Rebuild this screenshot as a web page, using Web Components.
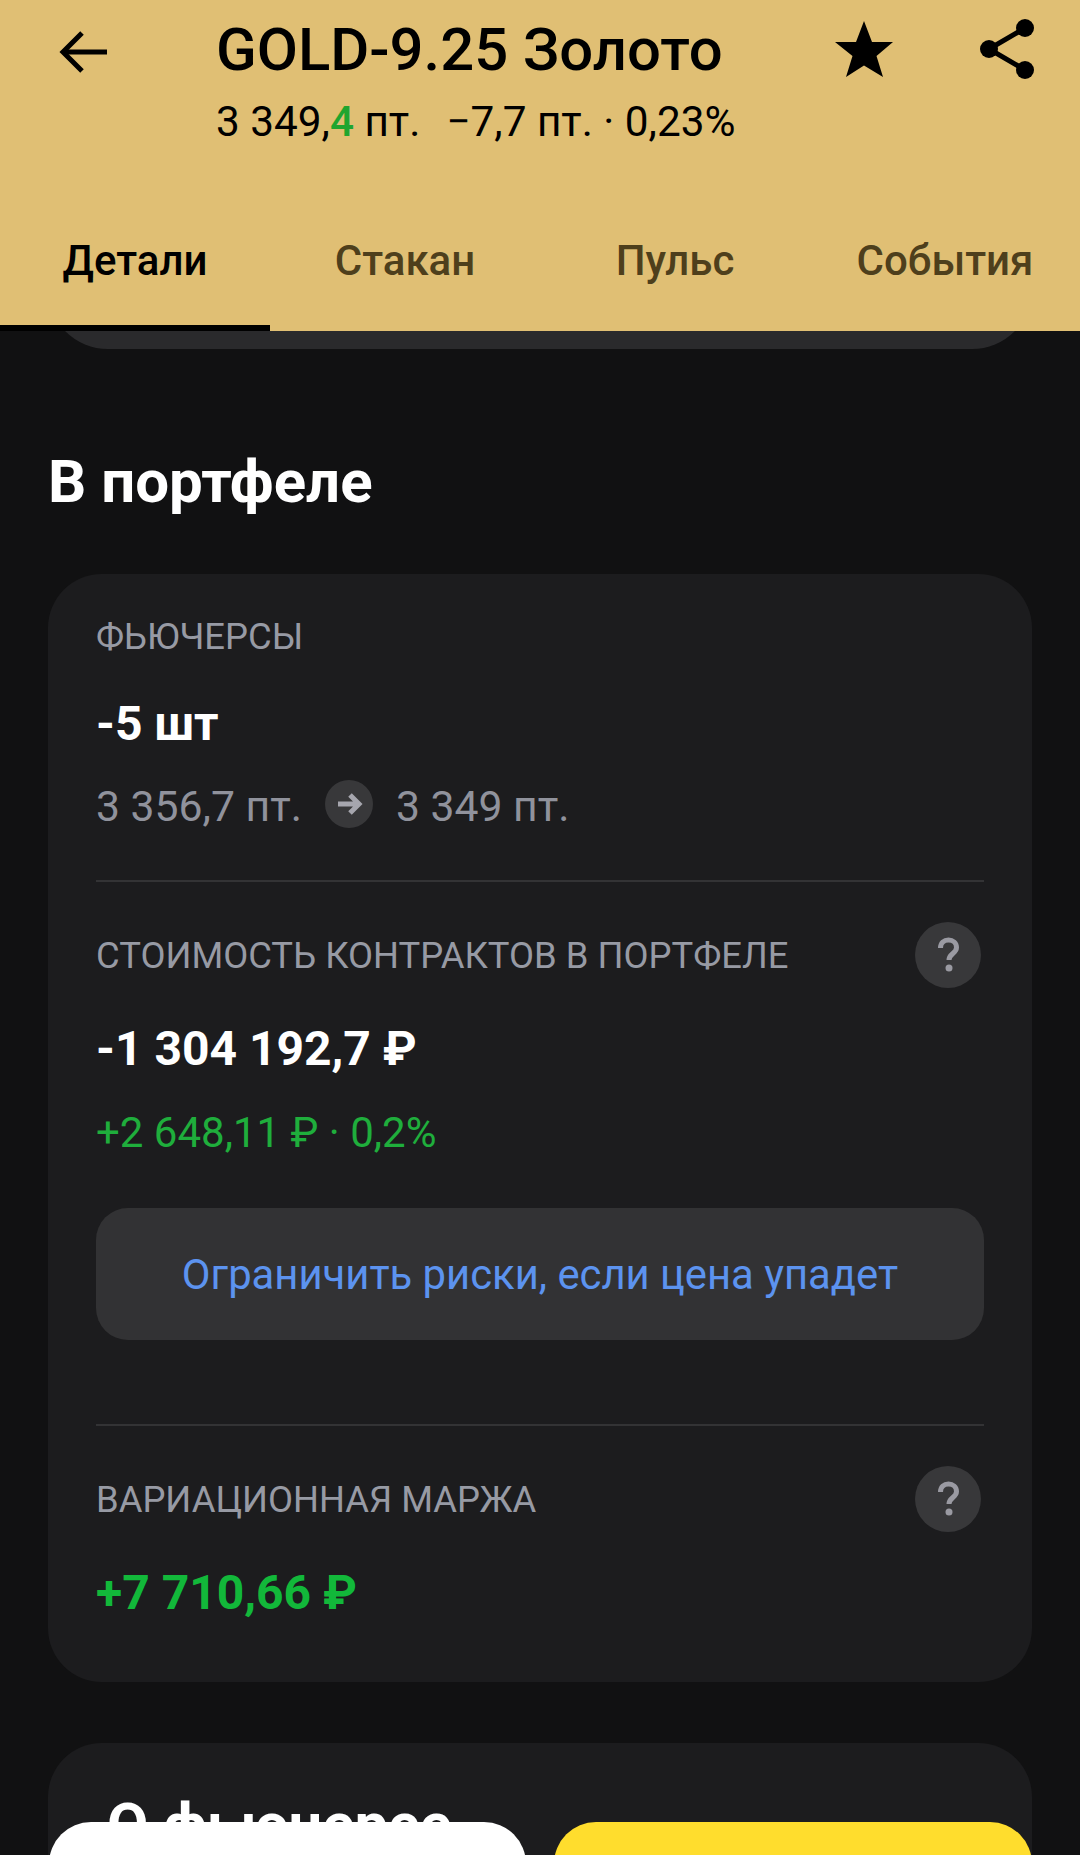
<!DOCTYPE html>
<html lang="ru">
<head>
<meta charset="utf-8">
<title>GOLD-9.25</title>
<style>
    html, body {
        margin: 0;
        height: 1855px;
        overflow: hidden;
        background: #111112;
        font-family: Roboto, "Liberation Sans", sans-serif;
    }
    .page {
        position: relative;
        height: 1855px;
        overflow: hidden;
    }
    .scroll-area {
        padding: 0 48px;
    }
    .change {
        color: #1fae3c;
        font-size: 42px;
        line-height: 50px;
        margin-top: 31px;
    }
</style>
</head>
<body>
<div class="page">
    <ticker-header></ticker-header>
    <div class="scroll-area">
        <card-tail></card-tail>
        <section-title>В портфеле</section-title>
        <info-card>
            <info-block label="ФЬЮЧЕРСЫ" value="-5 шт">
                <price-route from="3 356,7 пт." to="3 349 пт."></price-route>
            </info-block>
            <info-block label="СТОИМОСТЬ КОНТРАКТОВ В ПОРТФЕЛЕ" value="-1 304 192,7 ₽" help divided>
                <div class="change">+2 648,11 ₽ · 0,2%</div>
                <action-button>Ограничить риски, если цена упадет</action-button>
            </info-block>
            <info-block label="ВАРИАЦИОННАЯ МАРЖА" value="+7 710,66 ₽" help divided green></info-block>
        </info-card>
        <about-card>О фьючерсе</about-card>
    </div>
    <bottom-actions></bottom-actions>
</div>

<script>
class TickerHeader extends HTMLElement {
    constructor() {
        super();
        this.attachShadow({ mode: 'open' });
    }

    connectedCallback() {
        this.shadowRoot.innerHTML = `
            <style>
                :host {
                    display: block;
                    height: 331px;
                    background: #e0bf74;
                    color: #000;
                    position: relative;
                    z-index: 2;
                }
                .top {
                    display: grid;
                    grid-template-columns: 216px 1fr 68px;
                    height: 194px;
                    box-sizing: border-box;
                    padding-right: 24px;
                }
                .back {
                    padding: 30px 0 0 59px;
                }
                .back svg { display: block; }
                h1 {
                    margin: 16px 0 0;
                    font-size: 59.800px;
                    line-height: 68px;
                    font-weight: 500;
                    white-space: nowrap;
                }
                .quote {
                    font-size: 42.300px;
                    line-height: 44px;
                    font-weight: 400;
                    margin-top: 16px;
                    white-space: nowrap;
                }
                .quote b { color: #1fa52f; font-weight: 500; }
                .quote span { margin-left: 26px; }
                .star {
                    position: absolute;
                    left: 835px;
                    top: 21px;
                }
                .share {
                    position: absolute;
                    left: 980px;
                    top: 18px;
                }
                nav {
                    display: grid;
                    grid-template-columns: 270px 270px 270px 270px;
                    height: 137px;
                    font-size: 42px;
                    font-weight: 500;
                    color: #4e3f1c;
                }
                nav div {
                    display: flex;
                    justify-content: center;
                    padding-top: 44px;
                    box-sizing: border-box;
                    line-height: 46px;
                }
                nav .on {
                    color: #000;
                    border-bottom: 6px solid #000;
                }
            </style>
            <div class="top">
                <div class="back">
                    <svg width="50" height="44" viewBox="0 0 50 44" fill="none" stroke="#000" stroke-width="5">
                        <path d="M48 22H4"/>
                        <path d="M23 3 4 22l19 19"/>
                    </svg>
                </div>
                <div>
                    <h1>GOLD-9.25 Золото</h1>
                    <div class="quote">3 349,<b>4</b> пт.<span>−7,7 пт. · 0,23%</span></div>
                </div>
            </div>
            <svg class="star" width="58" height="57" viewBox="0 0 58 57">
                <path fill="#000" d="M29 0l8 21 21 0-16.500 14L48 56 29 44.500 11 56l6.500-21L0 21h21z"/>
            </svg>
            <svg class="share" width="56" height="62" viewBox="0 0 56 62">
                <g fill="#000">
                    <circle cx="45" cy="10" r="9"/>
                    <circle cx="9" cy="31" r="9"/>
                    <circle cx="45" cy="52" r="9"/>
                </g>
                <path d="M45 10 9 31l36 21" fill="none" stroke="#000" stroke-width="5"/>
            </svg>
            <nav>
                <div class="on">Детали</div>
                <div>Стакан</div>
                <div>Пульс</div>
                <div>События</div>
            </nav>
        `;
    }
}

// bottom edge of the card scrolled under the header
class CardTail extends HTMLElement {
    constructor() {
        super();
        this.attachShadow({ mode: 'open' });
    }

    connectedCallback() {
        this.shadowRoot.innerHTML = `
            <style>
                :host {
                    display: block;
                    height: 60px;
                    margin-top: -42px;
                    background: #2a2a2c;
                    border-radius: 0 0 60px 60px;
                }
            </style>
        `;
    }
}

class SectionTitle extends HTMLElement {
    constructor() {
        super();
        this.attachShadow({ mode: 'open' });
    }

    connectedCallback() {
        this.shadowRoot.innerHTML = `
            <style>
                :host {
                    display: block;
                    padding-top: 98px;
                    height: 225px;
                    box-sizing: border-box;
                    color: #fff;
                    font-size: 60px;
                    line-height: 70px;
                    font-weight: 700;
                }
            </style>
            <slot></slot>
        `;
    }
}

class InfoCard extends HTMLElement {
    constructor() {
        super();
        this.attachShadow({ mode: 'open' });
    }

    connectedCallback() {
        this.shadowRoot.innerHTML = `
            <style>
                :host {
                    display: block;
                    height: 1108px;
                    box-sizing: border-box;
                    padding: 0 48px;
                    background: #1c1c1e;
                    border-radius: 54px;
                }
            </style>
            <slot></slot>
        `;
    }
}

class InfoBlock extends HTMLElement {
    constructor() {
        super();
        this.attachShadow({ mode: 'open' });
    }

    connectedCallback() {
        const help = this.hasAttribute('help') ? `
            <svg class="help" width="66" height="66" viewBox="0 0 66 66">
                <circle cx="33" cy="33" r="33" fill="#38383a"/>
                <path d="M25.500 26c0-5 3.500-8 8-8s8 3 8 7.500c0 6-7.500 6-7.500 12.500" fill="none" stroke="#9a9aa2" stroke-width="5"/>
                <circle cx="34" cy="46" r="3.500" fill="#9a9aa2"/>
            </svg>` : '';
        this.shadowRoot.innerHTML = `
            <style>
                :host {
                    display: block;
                    padding-top: 35px;
                    color: #fff;
                }
                :host([divided]) {
                    padding-top: 40px;
                    border-top: 2px solid #333335;
                }
                .head {
                    display: flex;
                    justify-content: space-between;
                    align-items: center;
                    min-height: 54px;
                    padding-right: 3px;
                    color: #979aa4;
                    font-size: 36.400px;
                    font-weight: 400;
                }
                .value {
                    font-size: 48px;
                    line-height: 56px;
                    font-weight: 700;
                    margin-top: 33px;
                }
                :host([green]) .value { color: #12b83a; }
            </style>
            <div class="head"><span>${this.getAttribute('label')}</span>${help}</div>
            <div class="value">${this.getAttribute('value')}</div>
            <slot></slot>
        `;
    }
}

class PriceRoute extends HTMLElement {
    constructor() {
        super();
        this.attachShadow({ mode: 'open' });
    }

    connectedCallback() {
        this.shadowRoot.innerHTML = `
            <style>
                :host {
                    display: flex;
                    align-items: center;
                    gap: 23px;
                    height: 48px;
                    margin: 30px 0 50px;
                    color: #90929c;
                    font-size: 42.700px;
                }
                svg { margin-bottom: 4px; }
            </style>
            <span>${this.getAttribute('from')}</span>
            <svg width="48" height="48" viewBox="0 0 48 48">
                <circle cx="24" cy="24" r="24" fill="#38383a"/>
                <path d="M13 24h20M25 15l9 9-9 9" fill="none" stroke="#a6a6ae" stroke-width="5"/>
            </svg>
            <span>${this.getAttribute('to')}</span>
        `;
    }
}

class ActionButton extends HTMLElement {
    constructor() {
        super();
        this.attachShadow({ mode: 'open' });
    }

    connectedCallback() {
        this.shadowRoot.innerHTML = `
            <style>
                :host {
                    display: flex;
                    align-items: center;
                    justify-content: center;
                    height: 132px;
                    margin: 50px 0 84px;
                    border-radius: 32px;
                    background: #323234;
                    color: #5c93ef;
                    font-size: 41.800px;
                }
            </style>
            <slot></slot>
        `;
    }
}

class AboutCard extends HTMLElement {
    constructor() {
        super();
        this.attachShadow({ mode: 'open' });
    }

    connectedCallback() {
        this.shadowRoot.innerHTML = `
            <style>
                :host {
                    display: block;
                    margin-top: 61px;
                    height: 300px;
                    padding: 47px 59px 0;
                    background: #1c1c1e;
                    border-radius: 54px;
                    color: #fff;
                    font-size: 60px;
                    line-height: 70px;
                    font-weight: 700;
                }
            </style>
            <slot></slot>
        `;
    }
}

class BottomActions extends HTMLElement {
    constructor() {
        super();
        this.attachShadow({ mode: 'open' });
    }

    connectedCallback() {
        this.shadowRoot.innerHTML = `
            <style>
                :host {
                    position: absolute;
                    left: 49px;
                    top: 1822px;
                    width: 983px;
                    display: grid;
                    grid-template-columns: 477px 478px;
                    gap: 28px;
                }
                div {
                    height: 132px;
                    border-radius: 42px;
                }
                .sell { background: #fff; }
                .buy { background: #ffdd2d; }
            </style>
            <div class="sell"></div>
            <div class="buy"></div>
        `;
    }
}

customElements.define('ticker-header', TickerHeader);
customElements.define('card-tail', CardTail);
customElements.define('section-title', SectionTitle);
customElements.define('info-card', InfoCard);
customElements.define('info-block', InfoBlock);
customElements.define('price-route', PriceRoute);
customElements.define('action-button', ActionButton);
customElements.define('about-card', AboutCard);
customElements.define('bottom-actions', BottomActions);
</script>
</body>
</html>
